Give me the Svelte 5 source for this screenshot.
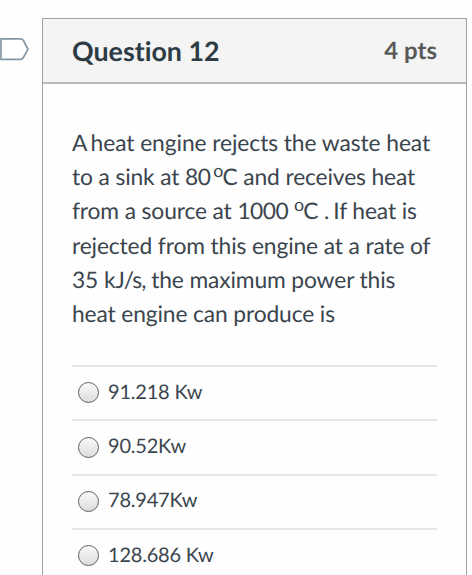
<script lang="ts">
  const title = 'Question 12';
  const points = 4;
  const answers = ['91.218 Kw', '90.52Kw', '78.947Kw', '128.686 Kw'];

  let selected: number | null = $state(null);
  let flagged = $state(false);

  type Run = { text: string; kind?: 'sup' | 'kern' | 'close' | 'digits' };

  const lines: Run[][] = [
    [{ text: 'A ', kind: 'kern' }, { text: 'heat engine rejects the waste heat' }],
    [
      { text: 'to a sink at ' },
      { text: '80', kind: 'digits' },
      { text: ' ', kind: 'close' },
      { text: 'o', kind: 'sup' },
      { text: 'C and receives heat' },
    ],
    [
      { text: 'from a source at ' },
      { text: '1000', kind: 'digits' },
      { text: ' ' },
      { text: 'o', kind: 'sup' },
      { text: 'C ' },
      { text: '. ', kind: 'kern' },
      { text: 'If heat is' },
    ],
    [{ text: 'rejected from this engine at a rate of' }],
    [{ text: '35 k' }, { text: 'J/s,', kind: 'kern' }, { text: ' the maximum power this' }],
    [{ text: 'heat engine can produce is' }],
  ];
</script>

<div class="quiz">
  <button class="flag" class:flagged aria-label="Flag question" onclick={() => (flagged = !flagged)}>
    <svg width="30" height="26" viewBox="0 0 30 26">
      <path d="M1 1.8H20.5Q22.4 1.8 23.4 3.5L28 12.3L23.4 20.5Q22.4 22.4 20.5 22.4H1Z" />
    </svg>
  </button>

  <section class="question">
    <header>
      <h2>{title}</h2>
      <span class="points">{points} pts</span>
    </header>

    <div class="body">
      <div class="prompt">
        {#each lines as runs}
          <div class="line">{#each runs as run}<span class={run.kind}>{run.text}</span>{/each}</div>
        {/each}
      </div>

      <div class="answers">
        {#each answers as answer, i}
          <label class="answer">
            <input type="radio" name="answer" value={i} bind:group={selected} />
            <span class="text">{answer}</span>
          </label>
        {/each}
      </div>
    </div>
  </section>
</div>

<style>
  :global(body) {
    background: #fefefe;
    overflow: hidden;
  }
  .quiz {
    display: flex;
    align-items: flex-start;
    box-sizing: border-box;
    width: 472px;
    height: 575px;
    padding-top: 18px;
    overflow: hidden;
    font-family: Lato, sans-serif;
    font-variant-ligatures: none;
    text-rendering: geometricPrecision;
    color: #3b454e;
  }
  .flag {
    flex: none;
    width: 42px;
    margin: 19px 0 0;
    padding: 0;
    border: 0;
    background: none;
    text-align: left;
  }
  .flag svg {
    display: block;
  }
  .flag path {
    fill: #fff;
    stroke: #8299a3;
    stroke-width: 1.7;
  }
  .flagged path {
    fill: #fc9;
  }
  .question {
    box-sizing: border-box;
    width: 425px;
    height: 620px;
    border: 1px solid #a2a2a2;
    background: #fefefe;
  }
  header {
    display: flex;
    align-items: center;
    justify-content: space-between;
    box-sizing: border-box;
    height: 65px;
    padding: 0 29px;
    background: #f4f4f4;
    border-bottom: 2px solid #bbb;
  }
  h2 {
    margin: 0;
    font-size: 26.8px;
    font-weight: 700;
    line-height: 36px;
    color: #2d3b45;
  }
  .points {
    font-size: 24px;
    font-weight: 700;
    line-height: 36px;
    color: #595959;
  }
  .body {
    padding: 41px 29px 0;
  }
  .line {
    height: 34.2px;
    font-size: 22.8px;
    line-height: 34.2px;
    letter-spacing: -0.13px;
    white-space: pre;
  }
  .line:first-child {
    letter-spacing: -0.08px;
  }
  .kern {
    letter-spacing: -0.95px;
  }
  .digits {
    letter-spacing: -0.5px;
  }
  .close {
    letter-spacing: -3px;
  }
  .sup {
    position: relative;
    top: -0.46em;
    font-size: 78%;
    line-height: 0;
    letter-spacing: -0.9px;
  }
  .answers {
    margin-top: 35px;
  }
  .answer {
    display: flex;
    align-items: center;
    box-sizing: border-box;
    height: 54.3px;
    padding-left: 6px;
    border-top: 2px solid #e6e6e6;
  }
  input {
    appearance: none;
    flex: none;
    box-sizing: border-box;
    width: 21px;
    height: 21px;
    margin: 0 9px 1px 0;
    border: 1.5px solid #606060;
    border-radius: 50%;
    background: linear-gradient(#fafafa, #dcdcdc);
  }
  input:checked {
    background: radial-gradient(circle, #444 35%, #eee 40%);
  }
  .text {
    margin-bottom: 3px;
    font-size: 20px;
    line-height: 30px;
    letter-spacing: -0.2px;
  }
</style>
